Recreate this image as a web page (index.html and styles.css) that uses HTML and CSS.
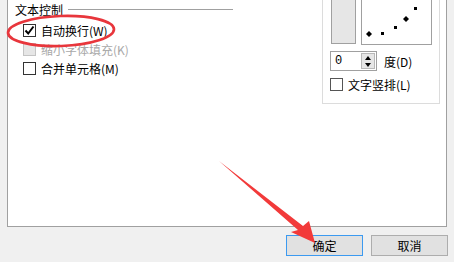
FILE: index.html
```html
<!DOCTYPE html>
<html>
<head>
    <title>单元格格式 - 对齐</title>
    <link rel="stylesheet" href="styles.css">
</head>
<body>
    <div class="panel">
        <div class="text-ctrl">
            <div class="section-head">
                <span>文本控制</span>
                <span class="rule"></span>
            </div>
            <label class="check-row">
                <span class="box checked">
                    <svg width="11" height="11" viewBox="0 0 11 11"><path d="M1.5 5.5 L4.2 8.5 L9.5 1.5" fill="none" stroke="#000" stroke-width="2"/></svg>
                </span>
                <span>自动换行(W)</span>
            </label>
            <label class="check-row disabled">
                <span class="box"></span>
                <span>缩小字体填充(K)</span>
            </label>
            <label class="check-row">
                <span class="box"></span>
                <span>合并单元格(M)</span>
            </label>
        </div>

        <div class="orient">
            <div class="orient-top">
                <div class="vert-box"></div>
                <div class="dial">
                    <svg width="69" height="43" viewBox="0 0 69 43">
                        <polygon points="7,31 10,34 7,37 4,34" fill="#000"/>
                        <rect x="19" y="32" width="3" height="3" fill="#000"/>
                        <rect x="32" y="26" width="3" height="3" fill="#000"/>
                        <polygon points="44,16 47,19 44,22 41,19" fill="#000"/>
                        <rect x="52" y="7" width="3" height="3" fill="#000"/>
                    </svg>
                </div>
            </div>
            <div class="spin-row">
                <div class="spin">
                    <span class="spin-val">0</span>
                    <span class="spin-btns">
                        <span class="spin-up"></span>
                        <span class="spin-down"></span>
                    </span>
                </div>
                <span class="spin-unit">度(D)</span>
            </div>
            <label class="check-row vert-check">
                <span class="box"></span>
                <span>文字竖排(L)</span>
            </label>
        </div>
    </div>

    <div class="buttons">
        <button class="btn default">确定</button>
        <button class="btn">取消</button>
    </div>

    <!-- annotations drawn over the dialog -->
    <svg class="marks" width="454" height="262" viewBox="0 0 454 262">
        <ellipse cx="61" cy="31" rx="53" ry="15" fill="none" stroke="#e8363c" stroke-width="2.7" transform="rotate(-2 61 31)"/>
        <polygon points="219,161 303,226 309,221 315,243 291,232 298,230" fill="#f23a3a"/>
    </svg>
</body>
</html>
```

FILE: styles.css
```css
/* Page */
body {
    margin: 0;
    width: 454px;
    height: 262px;
    background-color: #f0f0f0;
    font-family: "Noto Sans CJK SC", "Liberation Sans", sans-serif;
    font-size: 12px;
    color: #000;
    position: relative;
    overflow: hidden;
}

/* Tab page */
.panel {
    margin-left: 7px;
    width: 440px;
    height: 227px;
    box-sizing: border-box;
    border: 1px solid #a0a0a0;
    border-top: none;
    background-color: #fff;
    display: flex;
    align-items: flex-start;
}

/* Text control section */
.text-ctrl {
    width: 218px;
    padding-left: 7px;
}

.section-head {
    display: flex;
    align-items: center;
    height: 19px;
    margin-bottom: 2px;
}

.rule {
    flex: 1;
    height: 0;
    border-top: 1px solid #a0a0a0;
    margin-left: 5px;
}

.check-row {
    display: flex;
    align-items: center;
    height: 19px;
    padding-left: 8px;
    line-height: 1;
}

.box {
    width: 13px;
    height: 13px;
    box-sizing: border-box;
    border: 1px solid #333;
    background-color: #fff;
    margin-right: 5px;
    display: flex;
    align-items: center;
    justify-content: center;
}

.disabled {
    color: #a8a8a8;
}

.disabled .box {
    border-color: #c4c4c4;
    background-color: #e6e6e6;
}

/* Orientation group */
.orient {
    margin-left: 89px;
    width: 118px;
    height: 104px;
    box-sizing: border-box;
    border: 1px solid #dcdcdc;
    border-top: none;
    padding-left: 8px;
}

.orient-top {
    display: flex;
    align-items: flex-start;
}

.vert-box {
    width: 25px;
    height: 44px;
    box-sizing: border-box;
    border: 1px solid #a0a0a0;
    border-top: none;
    background-color: #e6e6e6;
}

.dial {
    width: 71px;
    height: 45px;
    box-sizing: border-box;
    margin-left: 5px;
    border: 1px solid #a0a0a0;
    border-top: none;
    background-color: #fff;
}

.dial svg {
    display: block;
}

.spin-row {
    display: flex;
    align-items: center;
    margin-top: 6px;
    margin-left: -1px;
}

.spin {
    width: 47px;
    height: 20px;
    box-sizing: border-box;
    border: 1px solid #a0a0a0;
    display: flex;
    align-items: center;
    justify-content: space-between;
    padding: 1px;
}

.spin-val {
    padding-left: 3px;
    font-family: "Liberation Mono", monospace;
}

.spin-btns {
    width: 14px;
    height: 16px;
    box-sizing: border-box;
    border: 1px solid #b8b8b8;
    background-color: #e6e6e6;
    display: flex;
    flex-direction: column;
    align-items: center;
    justify-content: space-around;
}

.spin-up,
.spin-down {
    width: 0;
    height: 0;
    border-left: 3px solid transparent;
    border-right: 3px solid transparent;
}

.spin-up {
    border-bottom: 4px solid #000;
}

.spin-down {
    border-top: 4px solid #000;
}

.spin-unit {
    margin-left: 7px;
}

.vert-check {
    padding-left: 0;
    margin-top: 4px;
    margin-left: -1px;
}

.vert-check .box {
    border-color: #555;
}

/* Dialog buttons */
.buttons {
    display: flex;
    justify-content: flex-end;
    gap: 8px;
    padding-top: 8px;
    padding-right: 6px;
}

.btn {
    width: 77px;
    height: 21px;
    box-sizing: border-box;
    border: 1px solid #adadad;
    background-color: #e1e1e1;
    font-family: inherit;
    font-size: 12px;
    color: #000;
    padding: 0;
}

.btn.default {
    border-color: #3c9af0;
}

/* Red annotation marks */
.marks {
    position: absolute;
    left: 0;
    top: 0;
    pointer-events: none;
}
```
